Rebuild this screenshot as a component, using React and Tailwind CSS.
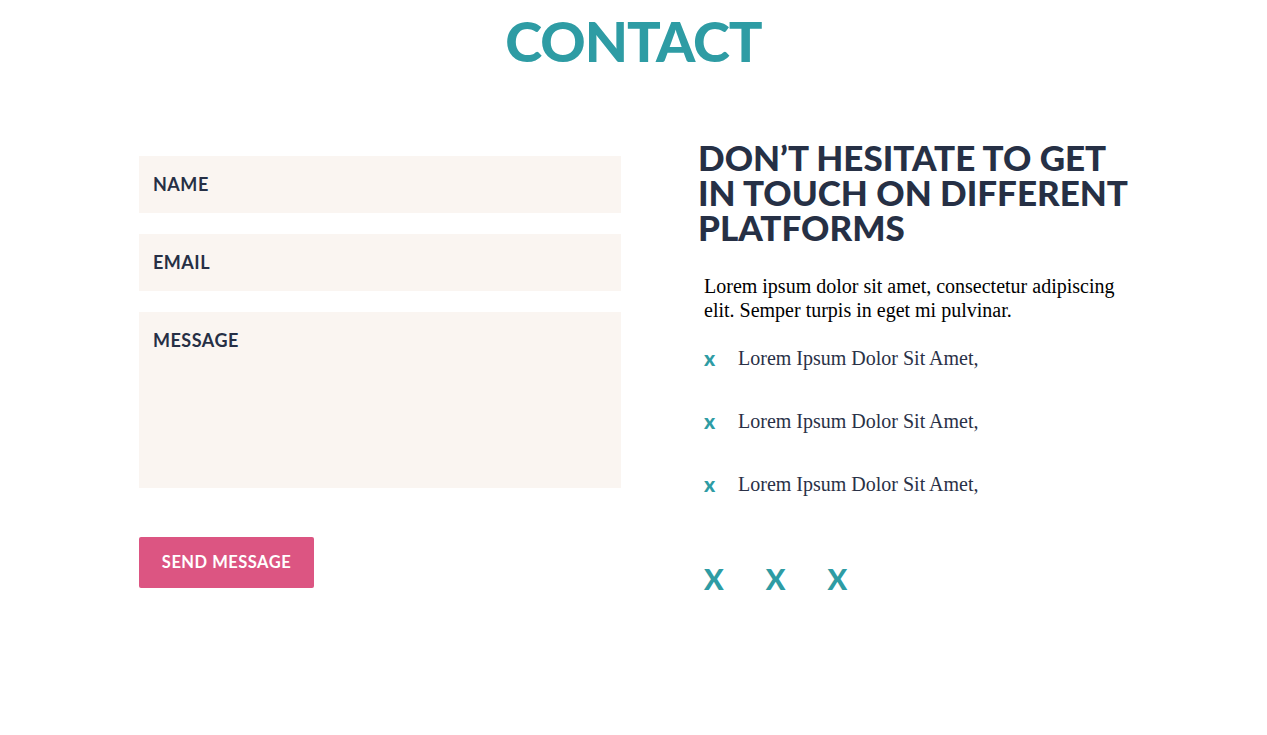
const fields = [
  { label: 'NAME', h: 'h-[57px]' },
  { label: 'EMAIL', h: 'h-[57px]' },
  { label: 'MESSAGE', h: 'h-[176px]' },
];

const items = ['Lorem Ipsum Dolor Sit Amet,', 'Lorem Ipsum Dolor Sit Amet,', 'Lorem Ipsum Dolor Sit Amet,'];

export default function App() {
  return (
    <main className="min-h-screen bg-white font-['Lato',sans-serif]">
      {/* Title */}
      <h1 className="pt-[13px] text-center text-[56px] font-black leading-none tracking-[-1px] text-[#2e9ca4]">
        CONTACT
      </h1>

      <section className="mt-[67px] flex px-[139px]">
        {/* Form */}
        <form className="flex w-[482px] shrink-0 flex-col pt-[20px]">
          <div className="flex flex-col gap-[21px]">
            {fields.map((f) => (
              <div key={f.label} className={`${f.h} bg-[#faf5f1] px-[14px] pt-[17px]`}>
                <span className="text-[18px] font-bold leading-[22px] tracking-[0.5px] text-[#262f45]">{f.label}</span>
              </div>
            ))}
          </div>
          <button
            type="button"
            className="mt-[49px] h-[51px] w-[175px] rounded-[2px] bg-[#dc5582] text-[16.5px] font-bold tracking-[0.5px] text-white"
          >
            SEND MESSAGE
          </button>
        </form>

        {/* Info */}
        <div className="ml-[77px] w-[450px]">
          <h2 className="mt-[4px] flex flex-col whitespace-nowrap text-[35px] font-black leading-[35px] text-[#263045]">
            <span>DON’T HESITATE TO GET</span>
            <span>IN TOUCH ON DIFFERENT</span>
            <span>PLATFORMS</span>
          </h2>
          <p className="mt-[29px] pl-[6px] font-['Liberation_Serif',serif] text-[20px] leading-[24px] text-black">
            Lorem ipsum dolor sit amet, consectetur adipiscing elit. Semper turpis in eget mi pulvinar.
          </p>
          <ul className="mt-[24px] flex flex-col gap-[39px] pl-[6px]">
            {items.map((t, i) => (
              <li key={i} className="flex items-center">
                <span className="w-[34px] text-[21px] font-black leading-[24px] text-[#2e9ca4]">x</span>
                <span className="font-['Liberation_Serif',serif] text-[20px] leading-[24px] text-[#2a3147]">{t}</span>
              </li>
            ))}
          </ul>
          <div className="mt-[68px] flex gap-[42px] pl-[6px]">
            {['X', 'X', 'X'].map((x, i) => (
              <a key={i} href="#" className="text-[29px] font-black leading-none text-[#2e9ca4]">
                {x}
              </a>
            ))}
          </div>
        </div>
      </section>
    </main>
  );
}
